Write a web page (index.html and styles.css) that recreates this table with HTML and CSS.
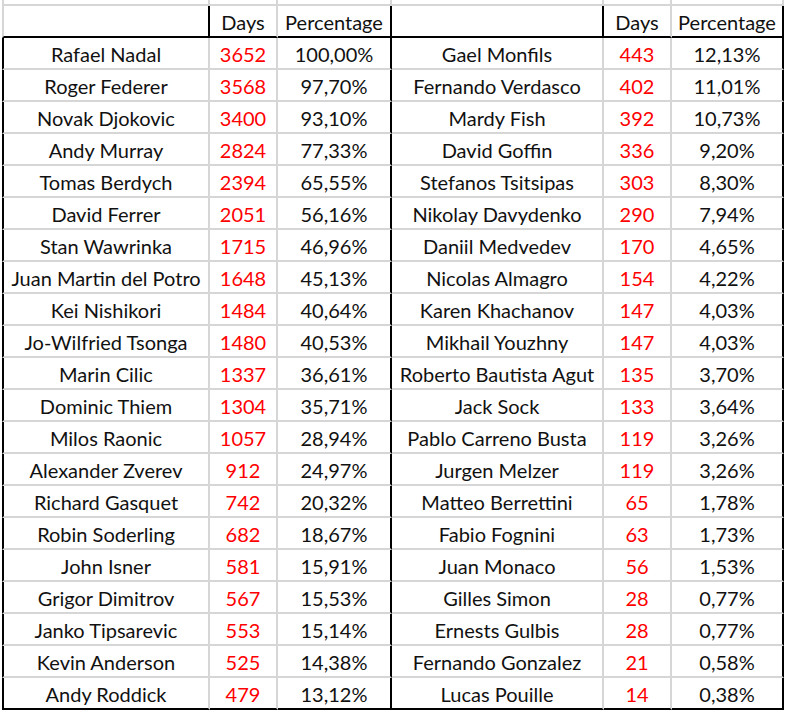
FILE: index.html
```html
<!DOCTYPE html>
<html>
<head>
<meta charset="utf-8">
<link rel="stylesheet" href="styles.css">
</head>
<body>
<div class="sheet">
  <div class="row pre"><div class="c a"></div><div class="c"></div><div class="c"></div><div class="c"></div><div class="c"></div><div class="c"></div></div>
  <div class="row hd"><div class="c a"></div><div class="c">Days</div><div class="c bk">Percentage</div><div class="c bk"></div><div class="c">Days</div><div class="c bk">Percentage</div></div>
  <div class="row"><div class="c a">Rafael Nadal</div><div class="c r">3652</div><div class="c bk">100,00%</div><div class="c">Gael Monfils</div><div class="c r">443</div><div class="c bk">12,13%</div></div>
  <div class="row"><div class="c a">Roger Federer</div><div class="c r">3568</div><div class="c bk">97,70%</div><div class="c">Fernando Verdasco</div><div class="c r">402</div><div class="c bk">11,01%</div></div>
  <div class="row"><div class="c a">Novak Djokovic</div><div class="c r">3400</div><div class="c bk">93,10%</div><div class="c">Mardy Fish</div><div class="c r">392</div><div class="c bk">10,73%</div></div>
  <div class="row"><div class="c a">Andy Murray</div><div class="c r">2824</div><div class="c bk">77,33%</div><div class="c">David Goffin</div><div class="c r">336</div><div class="c bk">9,20%</div></div>
  <div class="row"><div class="c a">Tomas Berdych</div><div class="c r">2394</div><div class="c bk">65,55%</div><div class="c">Stefanos Tsitsipas</div><div class="c r">303</div><div class="c bk">8,30%</div></div>
  <div class="row"><div class="c a">David Ferrer</div><div class="c r">2051</div><div class="c bk">56,16%</div><div class="c">Nikolay Davydenko</div><div class="c r">290</div><div class="c bk">7,94%</div></div>
  <div class="row"><div class="c a">Stan Wawrinka</div><div class="c r">1715</div><div class="c bk">46,96%</div><div class="c">Daniil Medvedev</div><div class="c r">170</div><div class="c bk">4,65%</div></div>
  <div class="row"><div class="c a">Juan Martin del Potro</div><div class="c r">1648</div><div class="c bk">45,13%</div><div class="c">Nicolas Almagro</div><div class="c r">154</div><div class="c bk">4,22%</div></div>
  <div class="row"><div class="c a">Kei Nishikori</div><div class="c r">1484</div><div class="c bk">40,64%</div><div class="c">Karen Khachanov</div><div class="c r">147</div><div class="c bk">4,03%</div></div>
  <div class="row"><div class="c a">Jo-Wilfried Tsonga</div><div class="c r">1480</div><div class="c bk">40,53%</div><div class="c">Mikhail Youzhny</div><div class="c r">147</div><div class="c bk">4,03%</div></div>
  <div class="row"><div class="c a">Marin Cilic</div><div class="c r">1337</div><div class="c bk">36,61%</div><div class="c">Roberto Bautista Agut</div><div class="c r">135</div><div class="c bk">3,70%</div></div>
  <div class="row"><div class="c a">Dominic Thiem</div><div class="c r">1304</div><div class="c bk">35,71%</div><div class="c">Jack Sock</div><div class="c r">133</div><div class="c bk">3,64%</div></div>
  <div class="row"><div class="c a">Milos Raonic</div><div class="c r">1057</div><div class="c bk">28,94%</div><div class="c">Pablo Carreno Busta</div><div class="c r">119</div><div class="c bk">3,26%</div></div>
  <div class="row"><div class="c a">Alexander Zverev</div><div class="c r">912</div><div class="c bk">24,97%</div><div class="c">Jurgen Melzer</div><div class="c r">119</div><div class="c bk">3,26%</div></div>
  <div class="row"><div class="c a">Richard Gasquet</div><div class="c r">742</div><div class="c bk">20,32%</div><div class="c">Matteo Berrettini</div><div class="c r">65</div><div class="c bk">1,78%</div></div>
  <div class="row"><div class="c a">Robin Soderling</div><div class="c r">682</div><div class="c bk">18,67%</div><div class="c">Fabio Fognini</div><div class="c r">63</div><div class="c bk">1,73%</div></div>
  <div class="row"><div class="c a">John Isner</div><div class="c r">581</div><div class="c bk">15,91%</div><div class="c">Juan Monaco</div><div class="c r">56</div><div class="c bk">1,53%</div></div>
  <div class="row"><div class="c a">Grigor Dimitrov</div><div class="c r">567</div><div class="c bk">15,53%</div><div class="c">Gilles Simon</div><div class="c r">28</div><div class="c bk">0,77%</div></div>
  <div class="row"><div class="c a">Janko Tipsarevic</div><div class="c r">553</div><div class="c bk">15,14%</div><div class="c">Ernests Gulbis</div><div class="c r">28</div><div class="c bk">0,77%</div></div>
  <div class="row"><div class="c a">Kevin Anderson</div><div class="c r">525</div><div class="c bk">14,38%</div><div class="c">Fernando Gonzalez</div><div class="c r">21</div><div class="c bk">0,58%</div></div>
  <div class="row last"><div class="c a">Andy Roddick</div><div class="c r">479</div><div class="c bk">13,12%</div><div class="c">Lucas Pouille</div><div class="c r">14</div><div class="c bk">0,38%</div></div>
</div>
</body>
</html>
```
FILE: styles.css
```css
html, body {
  margin: 0;
  padding: 0;
  background: #ffffff;
}
.sheet {
  margin-left: 2px;
  width: 782px;
  font-family: Lato, "Liberation Sans", sans-serif;
  font-size: 20px;
  color: #111111;
}
.row {
  display: grid;
  grid-template-columns: 208px 68px 114px 212px 68px 112px;
  height: 32px;
}
.c {
  box-sizing: border-box;
  border-right: 2px solid #d6d6d6;
  border-bottom: 2px solid #d6d6d6;
  display: flex;
  align-items: center;
  justify-content: center;
  padding-top: 2px;
  white-space: nowrap;
  overflow: hidden;
}
.c.a {
  border-left: 2px solid #000;
}
.c.bk {
  border-right-color: #000;
}
.c.r {
  color: #ff0000;
}
.row.pre {
  height: 6px;
}
.row.pre .c {
  border-right-color: #d6d6d6;
  border-left-color: #d6d6d6;
}
.row.hd .c {
  border-bottom-color: #000;
}
.row.hd .c.a {
  border-left-color: #d6d6d6;
  border-right-color: #000;
}
.row.hd .c:nth-child(4) {
  border-right-color: #000;
}
.row.last .c {
  border-bottom-color: #000;
}
```
